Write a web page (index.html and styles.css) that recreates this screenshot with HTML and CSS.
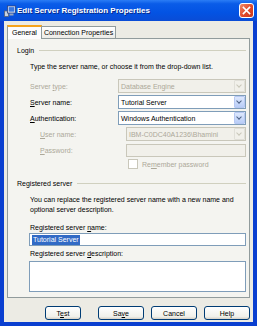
FILE: index.html
```html
<!DOCTYPE html>
<html lang="en">

<head>
	<meta charset="UTF-8">
	<title>Edit Server Registration Properties</title>
	<link rel="stylesheet" href="styles.css">
</head>

<body>
	<div class="window">
		<div class="titlebar">
			<svg class="app-icon" width="12" height="12" viewBox="0 0 12 12">
				<rect x="0.5" y="6" width="4" height="5.5" fill="#c8d2e0" stroke="#55607a" stroke-width="0.8"/>
				<rect x="3.5" y="1" width="8" height="7" fill="#e8f0ff" stroke="#2a3f7a" stroke-width="0.8"/>
				<rect x="4.6" y="2.1" width="5.8" height="4.6" fill="#3a78e0"/>
				<rect x="5.5" y="8.5" width="4" height="2" fill="#9aa6ba"/>
			</svg>
			<span class="title">Edit Server Registration Properties</span>
			<div class="close">
				<svg width="9" height="9" viewBox="0 0 9 9">
					<path d="M1.5 1.5 L7.5 7.5 M7.5 1.5 L1.5 7.5" stroke="#fff" stroke-width="1.7" stroke-linecap="square"/>
				</svg>
			</div>
		</div>

		<div class="client">
			<div class="tabs">
				<div class="tab active">General</div>
				<div class="tab">Connection Properties</div>
			</div>

			<div class="panel">
				<div class="group-head"><span>Login</span><i></i></div>
				<p class="note">Type the server name, or choose it from the drop-down list.</p>

				<div class="row disabled">
					<label>Server <u>t</u>ype:</label>
					<div class="combo"><span>Database Engine</span><b class="drop"></b></div>
				</div>
				<div class="row">
					<label><u>S</u>erver name:</label>
					<div class="combo"><span>Tutorial Server</span><b class="drop"></b></div>
				</div>
				<div class="row">
					<label><u>A</u>uthentication:</label>
					<div class="combo"><span>Windows Authentication</span><b class="drop"></b></div>
				</div>
				<div class="row sub disabled">
					<label><u>U</u>ser name:</label>
					<div class="combo"><span>IBM-C0DC40A1236\Bhamini</span><b class="drop"></b></div>
				</div>
				<div class="row sub disabled">
					<label><u>P</u>assword:</label>
					<div class="edit"></div>
				</div>
				<div class="check disabled">
					<b class="box"></b><span>Re<u>m</u>ember password</span>
				</div>

				<div class="group-head second"><span>Registered server</span><i></i></div>
				<p class="note wrap">You can replace the registered server name with a new name and optional server description.</p>

				<div class="caption">Registered server <u>n</u>ame:</div>
				<div class="edit wide"><span class="sel">Tutorial Server</span></div>
				<div class="caption">Registered server <u>d</u>escription:</div>
				<div class="memo"></div>
			</div>

			<div class="buttons">
				<button class="btn test">T<u>e</u>st</button>
				<button class="btn">Sa<u>v</u>e</button>
				<button class="btn">Cancel</button>
				<button class="btn">Help</button>
			</div>
		</div>
	</div>
</body>

</html>
```

FILE: styles.css
```css
body {
	margin: 0;
	font: 7px 'Liberation Sans', Arial, sans-serif;
	color: #000;
}

.window {
	width: 257px;
	height: 326px;
	box-sizing: border-box;
	background: #0a3fd0;
	display: flex;
	flex-direction: column;
}

.titlebar {
	height: 21px;
	display: flex;
	align-items: center;
	padding: 0 3px 0 4px;
	background: linear-gradient(#2b7df5 0%, #0a5ce8 18%, #0353e3 60%, #0a4cd6 100%);
	color: #fff;
}

.app-icon {
	margin-right: 1px;
}

.title {
	font-weight: bold;
	font-size: 8px;
	flex: 1;
	text-shadow: 1px 1px 0 #0a2a8a;
}

.close {
	width: 13px;
	height: 13px;
	border: 1px solid #fff;
	border-radius: 3px;
	background: linear-gradient(135deg, #f08a6a, #e0482a 55%, #c8381c);
	display: flex;
	align-items: center;
	justify-content: center;
}

.client {
	flex: 1;
	margin: 0 4px 4px 4px;
	background: #ecebe4;
	padding: 5px 3px 0 3px;
	display: flex;
	flex-direction: column;
}

.tabs {
	display: flex;
	height: 12px;
	align-items: flex-end;
}

.tab {
	height: 11px;
	line-height: 11px;
	padding: 0 2px;
	border: 1px solid #919b9c;
	border-bottom: none;
	background: linear-gradient(#fff, #ecebe6);
	margin-right: -1px;
}

.tab.active {
	height: 12px;
	line-height: 12px;
	border-top: 2px solid #f5a31c;
	background: #fcfcfe;
	position: relative;
	z-index: 1;
	margin-bottom: -1px;
	padding: 0 4px;
}

.panel {
	height: 260px;
	box-sizing: border-box;
	border: 1px solid #919b9c;
	background: #f4f4f0;
	padding: 6px 3px 0 9px;
}

.group-head {
	display: flex;
	align-items: center;
	height: 10px;
}

.group-head i {
	flex: 1;
	height: 0;
	border-top: 1px solid #d0d0bf;
	margin-left: 5px;
}

.group-head.second {
	margin-top: 9px;
}

.note {
	margin: 7px 0 7px 13px;
	line-height: 10px;
}

.note.wrap {
	width: 205px;
	margin-bottom: 8px;
}

.row {
	display: flex;
	align-items: center;
	height: 14px;
	margin-bottom: 2px;
	padding-left: 13px;
}

.row label {
	width: 88px;
}

.row.sub {
	padding-left: 23px;
}

.row.sub label {
	width: 86px;
}

.disabled {
	color: #aca899;
}

.combo,
.edit {
	flex: 1;
	height: 14px;
	box-sizing: border-box;
	border: 1px solid #7f9db9;
	background: #fff;
	display: flex;
	align-items: center;
	padding-left: 2px;
}

.combo span {
	flex: 1;
}

.drop {
	width: 11px;
	height: 12px;
	box-sizing: border-box;
	border: 1px solid #b7c8f2;
	border-radius: 1px;
	background: linear-gradient(#dde8fd, #b9cdf7);
	position: relative;
}

.drop::after {
	content: '';
	position: absolute;
	left: 2px;
	top: 2px;
	width: 3px;
	height: 3px;
	border-right: 1.5px solid #4d6185;
	border-bottom: 1.5px solid #4d6185;
	transform: rotate(45deg);
}

.disabled .combo,
.disabled .edit {
	background: #f1f0ea;
	border-color: #c9c7ba;
}

.disabled .drop {
	background: #f1f0ea;
	border-color: #e0dfd8;
}

.disabled .drop::after {
	border-color: #c9c7ba;
}

.row.sub .edit {
	height: 13px;
}

.check {
	display: flex;
	align-items: center;
	height: 10px;
	margin-left: 111px;
}

.check .box {
	width: 10px;
	height: 10px;
	box-sizing: border-box;
	border: 1px solid #c9c7ba;
	background: #fff;
	margin-right: 4px;
}

.caption {
	margin-left: 13px;
	line-height: 10px;
}

.edit.wide {
	margin: 0 0 3px 12px;
	height: 13px;
	flex: none;
}

.sel {
	background: #316ac5;
	color: #fff;
	padding: 0 1px;
	line-height: 10px;
}

.memo {
	margin: 2px 0 0 12px;
	height: 31px;
	box-sizing: border-box;
	border: 1px solid #7f9db9;
	background: #fff;
}

.buttons {
	display: flex;
	justify-content: flex-end;
	gap: 7px;
	margin-top: 8px;
}

.btn {
	width: 46px;
	height: 14px;
	padding: 0;
	font: 7px 'Liberation Sans', Arial, sans-serif;
	border: 1px solid #003c74;
	border-radius: 3px;
	background: linear-gradient(#fff, #f0f0ea 80%, #d6d0c5);
	color: #000;
}

.btn.test {
	width: 36px;
	margin-right: 10px;
}
```
